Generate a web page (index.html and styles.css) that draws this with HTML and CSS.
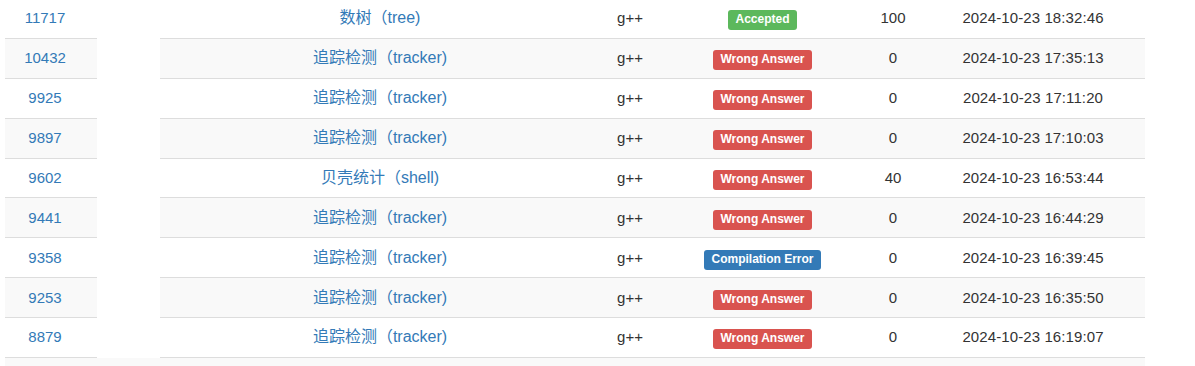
FILE: index.html
```html
<!DOCTYPE html>
<html lang="zh-CN">
<head>
<meta charset="utf-8">
<title>Submissions</title>
<link rel="stylesheet" href="styles.css">
</head>
<body>
<div class="wrap">
  <table class="subs">
    <colgroup>
      <col class="c-id"><col class="c-user"><col class="c-name"><col class="c-lang"><col class="c-status"><col class="c-score"><col class="c-time">
    </colgroup>
    <tbody>
      <tr><td><a class="num">11717</a></td><td></td><td><a class="prob">数树（tree)</a></td><td>g++</td><td><span class="badge ok">Accepted</span></td><td class="score">100</td><td class="time">2024-10-23 18:32:46</td></tr>
      <tr><td><a class="num">10432</a></td><td></td><td><a class="prob">追踪检测（tracker)</a></td><td>g++</td><td><span class="badge wa">Wrong Answer</span></td><td class="score">0</td><td class="time">2024-10-23 17:35:13</td></tr>
      <tr><td><a class="num">9925</a></td><td></td><td><a class="prob">追踪检测（tracker)</a></td><td>g++</td><td><span class="badge wa">Wrong Answer</span></td><td class="score">0</td><td class="time">2024-10-23 17:11:20</td></tr>
      <tr><td><a class="num">9897</a></td><td></td><td><a class="prob">追踪检测（tracker)</a></td><td>g++</td><td><span class="badge wa">Wrong Answer</span></td><td class="score">0</td><td class="time">2024-10-23 17:10:03</td></tr>
      <tr><td><a class="num">9602</a></td><td></td><td><a class="prob">贝壳统计（shell)</a></td><td>g++</td><td><span class="badge wa">Wrong Answer</span></td><td class="score">40</td><td class="time">2024-10-23 16:53:44</td></tr>
      <tr><td><a class="num">9441</a></td><td></td><td><a class="prob">追踪检测（tracker)</a></td><td>g++</td><td><span class="badge wa">Wrong Answer</span></td><td class="score">0</td><td class="time">2024-10-23 16:44:29</td></tr>
      <tr><td><a class="num">9358</a></td><td></td><td><a class="prob">追踪检测（tracker)</a></td><td>g++</td><td><span class="badge ce">Compilation Error</span></td><td class="score">0</td><td class="time">2024-10-23 16:39:45</td></tr>
      <tr><td><a class="num">9253</a></td><td></td><td><a class="prob">追踪检测（tracker)</a></td><td>g++</td><td><span class="badge wa">Wrong Answer</span></td><td class="score">0</td><td class="time">2024-10-23 16:35:50</td></tr>
      <tr><td><a class="num">8879</a></td><td></td><td><a class="prob">追踪检测（tracker)</a></td><td>g++</td><td><span class="badge wa">Wrong Answer</span></td><td class="score">0</td><td class="time">2024-10-23 16:19:07</td></tr>
      <tr class="tail"><td></td><td></td><td></td><td></td><td></td><td></td><td></td></tr>
    </tbody>
  </table>
  <div class="mask"></div>
</div>
</body>
</html>
```

FILE: styles.css
```css
html, body {
  margin: 0;
  padding: 0;
  background: #fff;
}
body {
  font-family: "Liberation Sans", Arial, "Noto Sans CJK SC", sans-serif;
  font-size: 15px;
  color: #333;
  overflow: hidden;
  height: 366px;
}
.wrap {
  position: relative;
  padding-left: 5px;
  margin-top: -2px;
}
.subs {
  width: 1140px;
  border-collapse: collapse;
  table-layout: fixed;
}
.c-id { width: 80px; }
.c-user { width: 75px; }
.c-name { width: 440px; }
.c-lang { width: 60px; }
.c-status { width: 205px; }
.c-score { width: 56px; }
.c-time { width: 224px; }
.subs td {
  height: 38.875px;
  padding: 0;
  border-top: 1px solid #ddd;
  text-align: center;
  vertical-align: middle;
  white-space: nowrap;
  line-height: 20px;
}
.subs tr:nth-child(even) td {
  background: #f9f9f9;
}
.num, .prob {
  color: #337ab7;
  text-decoration: none;
}
.prob {
  font-size: 16px;
}
.time {
  font-size: 15px;
  letter-spacing: 0.1px;
}
.badge {
  display: inline-block;
  font-size: 12px;
  font-weight: bold;
  line-height: 13px;
  padding: 3px 7.5px 4px;
  border-radius: 3px;
  color: #fff;
  position: relative;
  top: 1px;
}
.ok { background: #5cb85c; }
.wa { background: #d9534f; }
.ce { background: #337ab7; }
.mask {
  position: absolute;
  left: 97px;
  top: 40px;
  width: 63px;
  height: 320px;
  background: #fff;
}
```
